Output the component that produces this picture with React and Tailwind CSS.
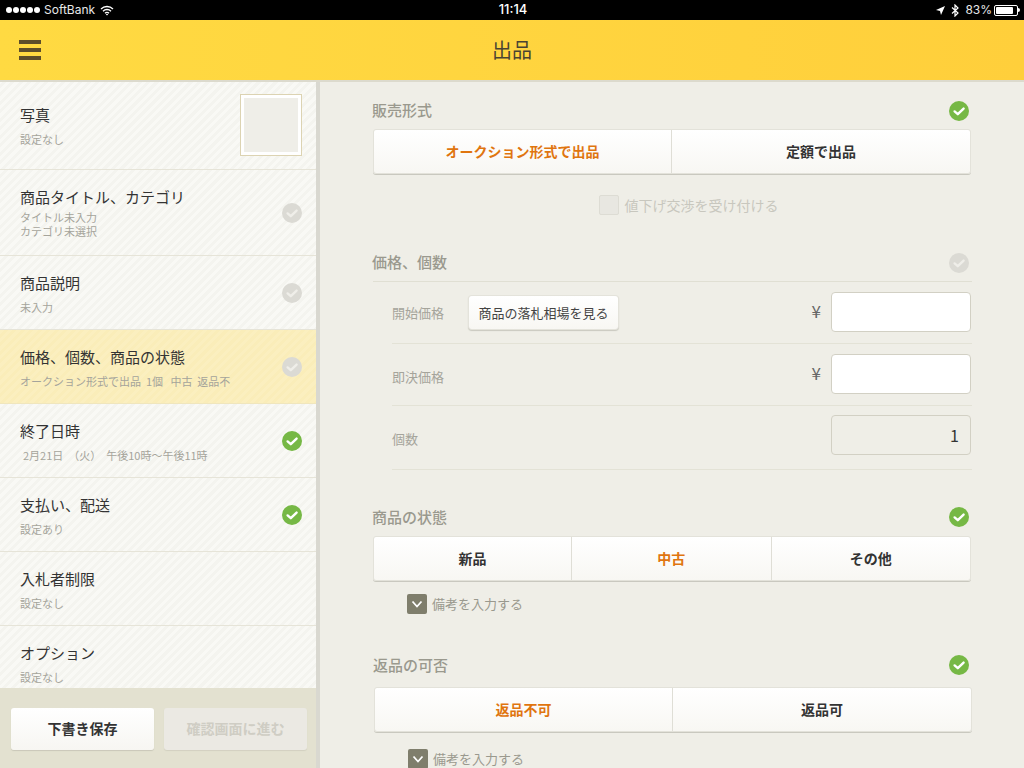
import React from 'react'

const font = { fontFamily: '"Noto Sans CJK JP", "Liberation Sans", sans-serif' }

function Check({ on, className = '' }) {
  return (
    <svg width="20" height="20" viewBox="0 0 20 20" className={`shrink-0 ${className}`}>
      <circle cx="10" cy="10" r="10" fill={on ? '#76b845' : '#dbdad4'} />
      <path d="M5.6 10.4 L8.8 13.2 L14.6 7.6" fill="none" stroke={on ? '#fff' : '#efeee9'} strokeWidth="2.4" strokeLinecap="round" strokeLinejoin="round" />
    </svg>
  )
}

function SideRow({ title, subs, check, active, height, pt, subGap, indent, thumb }) {
  return (
    <div
      className={`relative shrink-0 border-b box-border px-5 ${height} ${pt} ${
        active
          ? 'border-[#f0e6bd] bg-[repeating-linear-gradient(135deg,#fbefbf_0_3px,#faedb9_3px_6px)]'
          : 'border-[#e6e4d8] bg-[repeating-linear-gradient(135deg,#f9f9f5_0_3px,#f4f4ef_3px_6px)]'
      }`}
    >
      <div className="text-[15px] leading-5 text-[#333]">{title}</div>
      <div className={`${subGap} ${indent ? 'pl-[3px]' : ''} text-[11px] leading-[14px] text-[#a5a49b] whitespace-pre`}>
        {subs.map(s => <div key={s}>{s}</div>)}
      </div>
      {check && <Check on={check === 'on'} className="absolute right-[14px] top-1/2 -translate-y-1/2" />}
      {thumb && (
        <div className="absolute left-[240px] top-[14px] h-[62px] w-[62px] border border-[#dcd3b2] bg-white p-[3px]">
          <div className="h-full w-full bg-[#efeee8]" />
        </div>
      )}
    </div>
  )
}

function Sidebar() {
  return (
    <aside className="flex h-full w-[320px] shrink-0 flex-col border-r-4 border-[#d9d8d0]">
      <div className="flex-1 overflow-hidden">
        <SideRow title="写真" subs={['設定なし']} height="h-[90px]" pt="pt-[25px]" subGap="mt-[7px]" thumb />
        <SideRow title="商品タイトル、カテゴリ" subs={['タイトル未入力', 'カテゴリ未選択']} check="off" height="h-[86px]" pt="pt-[17px]" subGap="mt-[3px]" />
        <SideRow title="商品説明" subs={['未入力']} check="off" height="h-[74px]" pt="pt-[17px]" subGap="mt-[7px]" />
        <SideRow title="価格、個数、商品の状態" subs={['オークション形式で出品  1個   中古  返品不']} check="off" active height="h-[74px]" pt="pt-[17px]" subGap="mt-[7px]" />
        <SideRow title="終了日時" subs={['2月21日  （火）  午後10時〜午後11時']} check="on" height="h-[74px]" pt="pt-[17px]" subGap="mt-[7px]" indent />
        <SideRow title="支払い、配送" subs={['設定あり']} check="on" height="h-[74px]" pt="pt-[17px]" subGap="mt-[7px]" />
        <SideRow title="入札者制限" subs={['設定なし']} height="h-[74px]" pt="pt-[17px]" subGap="mt-[7px]" />
        <SideRow title="オプション" subs={['設定なし']} height="h-[74px]" pt="pt-[17px]" subGap="mt-[7px]" />
      </div>
      <div className="flex h-[80px] shrink-0 gap-[10px] bg-[#e3e1d0] pl-[11px] pt-5">
        <button className="h-[42px] w-[143px] rounded-[3px] bg-gradient-to-b from-white to-[#f7f6f2] pb-[2px] text-sm font-bold text-[#333] shadow-[0_1px_1px_#c9c7b8]">
          下書き保存
        </button>
        <button className="h-[42px] w-[143px] rounded-[3px] bg-[#ebe9e3] pb-[2px] text-sm font-bold text-[#cfcdc4] shadow-[0_1px_1px_#d2d0c0]">
          確認画面に進む
        </button>
      </div>
    </aside>
  )
}

function SectionHead({ title, on, mt, line, checkClass }) {
  return (
    <div className={`flex h-6 items-center justify-between pr-[3px] ${mt} ${line ? 'box-content border-b border-[#e0dfd3] pb-[7px]' : ''}`}>
      <span className="-ml-px text-[15px] font-medium text-[#9a998e]">{title}</span>
      <Check on={on} className={checkClass} />
    </div>
  )
}

function Segments({ items, selected, mt, firstWidth }) {
  return (
    <div className={`flex h-[45px] w-[598px] overflow-hidden rounded-[3px] border border-[#e3e2da] bg-gradient-to-b from-white to-[#f8f7f3] shadow-[0_1px_0_#c9c8bf] ${mt}`}>
      {items.map((label, i) => (
        <div
          key={label}
          className={`flex items-center justify-center pb-[2px] text-sm font-bold ${i > 0 ? 'flex-1 border-l border-[#dfded6]' : `shrink-0 ${firstWidth}`} ${
            label === selected ? 'text-[#e0750f]' : 'text-[#333]'
          }`}
        >
          {label}
        </div>
      ))}
    </div>
  )
}

function Note({ mt, ml }) {
  return (
    <div className={`flex h-5 items-center gap-[5px] ${mt} ${ml}`}>
      <span className="flex h-5 w-5 items-center justify-center rounded-[2px] bg-[#7f7e6c]">
        <svg width="14" height="14" viewBox="0 0 14 14">
          <path d="M2.5 4.5 L7 9.5 L11.5 4.5" fill="none" stroke="#fff" strokeWidth="1.8" />
        </svg>
      </span>
      <span className="text-[13px] text-[#9a998e]">備考を入力する</span>
    </div>
  )
}

function PriceRow({ label, labelClass, children, last }) {
  return (
    <div className={`ml-[19px] flex items-center border-b border-[#e3e2d6] box-border ${last ? 'h-[64px] pb-[5px]' : 'h-[62px]'}`}>
      <span className={`w-[77px] text-[13px] text-[#a5a49b] ${labelClass}`}>{label}</span>
      {children}
    </div>
  )
}

function Yen() {
  return <span className="mb-1 ml-auto mr-[10px] text-[17px] leading-none text-[#666]">¥</span>
}

function Main() {
  return (
    <main className="h-full flex-1 overflow-hidden bg-[#efeee7] pl-[53px] pr-[52px] pt-[18px]">
      <SectionHead title="販売形式" on checkClass="relative top-px" />
      <Segments items={['オークション形式で出品', '定額で出品']} selected="オークション形式で出品" mt="mt-[7px]" firstWidth="w-[297px]" />
      <div className="mt-[21px] flex h-5 items-center justify-center gap-[6px] pl-[32px]">
        <span className="h-5 w-5 rounded-[2px] border border-[#dddcd4] bg-[#e8e7e1]" />
        <span className="text-sm text-[#c8c7be]">値下げ交渉を受け付ける</span>
      </div>

      <SectionHead title="価格、個数" mt="mt-[35px]" line checkClass="relative top-px" />
      <PriceRow label="開始価格" labelClass="pt-px">
        <button className="h-[33px] w-[149px] rounded-[3px] bg-gradient-to-b from-white to-[#f8f7f3] text-[13px] text-[#444] shadow-[0_0_0_1px_#e4e3db,0_1px_1px_1px_#c9c8bf]">
          商品の落札相場を見る
        </button>
        <Yen />
        <div className="mb-px mr-px h-10 w-[140px] rounded-[4px] border border-[#d2d0c4] bg-white" />
      </PriceRow>
      <PriceRow label="即決価格" labelClass="pt-[5px]">
        <Yen />
        <div className="mb-px mr-px h-10 w-[140px] rounded-[4px] border border-[#d2d0c4] bg-white" />
      </PriceRow>
      <PriceRow label="個数" labelClass="pt-2" last>
        <div className="ml-auto mr-px flex h-10 w-[140px] items-center justify-end rounded-[4px] border border-[#d2d0c4] pr-[11px] text-base text-[#333]">
          1
        </div>
      </PriceRow>

      <SectionHead title="商品の状態" on mt="mt-[35px]" />
      <Segments items={['新品', '中古', 'その他']} selected="中古" mt="mt-[7px]" firstWidth="w-[197px]" />
      <Note mt="mt-[13px]" ml="ml-[34px]" />

      <div className="ml-px">
        <SectionHead title="返品の可否" on mt="mt-[39px]" />
        <Segments items={['返品不可', '返品可']} selected="返品不可" mt="mt-[10px]" firstWidth="w-[297px]" />
        <Note mt="mt-[17px]" ml="ml-[34px]" />
      </div>
    </main>
  )
}

function StatusBar() {
  return (
    <div className="flex h-5 shrink-0 items-center bg-black pl-[6px] pr-[4px] text-xs text-[#e8e8e8]" style={{ fontFamily: 'Inter, "Liberation Sans", sans-serif' }}>
      <div className="flex w-[474px] items-center">
        <div className="flex gap-px">
          {[0, 1, 2, 3, 4].map(i => <span key={i} className="h-[6px] w-[6px] rounded-full bg-white" />)}
        </div>
        <span className="ml-1 text-[12px]">SoftBank</span>
        <svg width="14" height="11" viewBox="0 0 14 11" className="ml-[5px]">
          <path d="M1 4 A8.5 8.5 0 0 1 13 4 M3 6.2 A5.6 5.6 0 0 1 11 6.2 M5 8.2 A2.8 2.8 0 0 1 9 8.2" fill="none" stroke="#fff" strokeWidth="1.3" />
          <path d="M7 10.6 L5.8 9.2 A1.8 1.8 0 0 1 8.2 9.2 Z" fill="#fff" />
        </svg>
      </div>
      <span className="w-[66px] text-center text-[13px] font-medium text-white">11:14</span>
      <div className="ml-auto flex items-center">
        <svg width="9" height="9" viewBox="0 0 9 9"><path d="M9 0 L5 9 L4 5 L0 4 Z" fill="#fff" /></svg>
        <svg width="8" height="13" viewBox="0 0 8 13" className="ml-[6px]">
          <path d="M1 3.5 L7 9 L4 12 V1 L7 4 L1 9.5" fill="none" stroke="#fff" strokeWidth="1.2" />
        </svg>
        <span className="ml-[6px] text-[12px]">83%</span>
        <div className="ml-[2px] flex items-center">
          <div className="h-[11px] w-[24px] rounded-[2px] border border-white p-px">
            <div className="h-full w-[83%] rounded-[1px] bg-white" />
          </div>
          <div className="h-1 w-[2px] rounded-r-sm bg-white" />
        </div>
      </div>
    </div>
  )
}

export default function App() {
  return (
    <div className="flex h-[768px] w-[1024px] flex-col overflow-hidden" style={font}>
      <StatusBar />
      <header className="relative z-10 flex h-[60px] shrink-0 items-center justify-center bg-gradient-to-r from-[#ffda42] to-[#ffcf3b] shadow-[0_2px_0_#dcdacd]">
        <div className="absolute left-[19px] top-[20px] flex w-[22px] flex-col gap-1">
          <span className="h-1 bg-[#5c4d2a]" />
          <span className="h-1 bg-[#5c4d2a]" />
          <span className="h-1 bg-[#5c4d2a]" />
        </div>
        <h1 className="text-xl text-[#4a4433]">出品</h1>
      </header>
      <div className="flex min-h-0 flex-1">
        <Sidebar />
        <Main />
      </div>
    </div>
  )
}
